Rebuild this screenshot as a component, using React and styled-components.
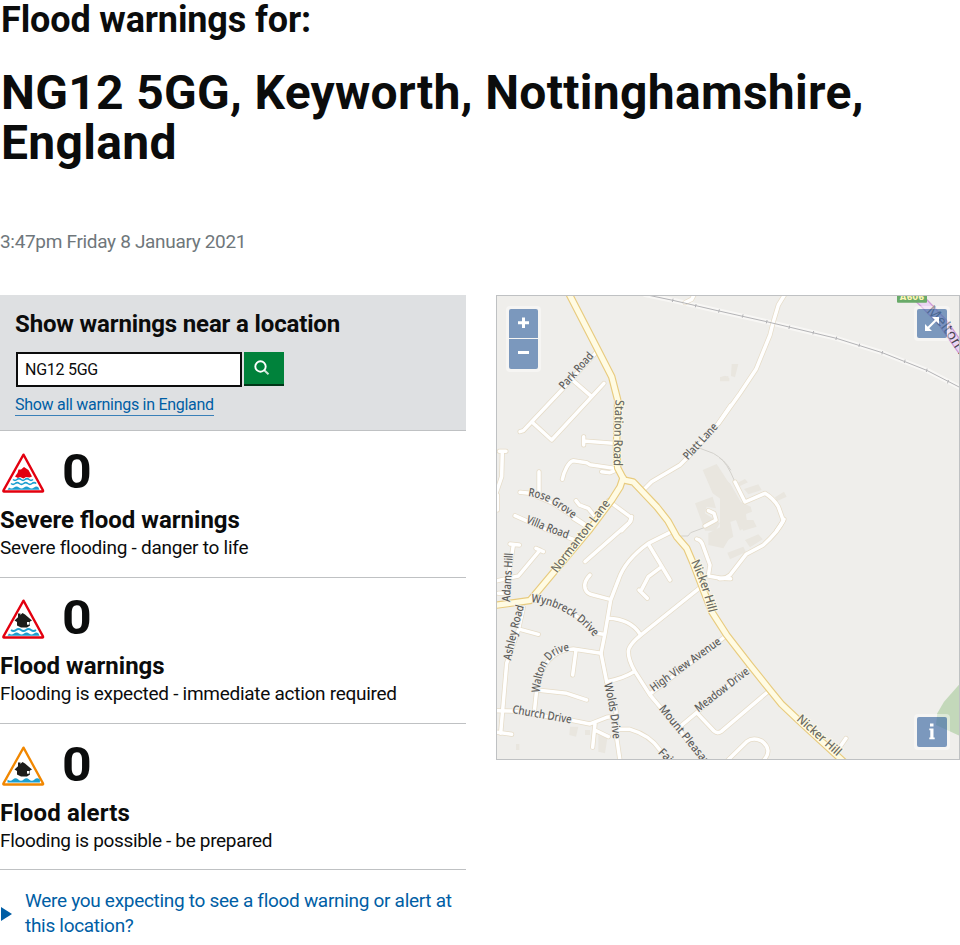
import React from "react";
import styled, { createGlobalStyle } from "styled-components";

const GlobalStyle = createGlobalStyle`
  *, *::before, *::after { box-sizing: border-box; }
  body {
    margin: 0;
    background: #fff;
    color: #0b0c0c;
    font-family: Roboto, "Liberation Sans", sans-serif;
    overflow: hidden;
  }
  h1, h2, h3, p { margin: 0; }
`;

/* ---------- page header ---------- */
const Page = styled.main`
  width: 960px;
  height: 945px;
  overflow: hidden;
`;
const Lead = styled.h2`
  font-size: 36px;
  line-height: 40px;
  letter-spacing: -0.13px;
  padding-left: 1px;
`;
const Place = styled.h1`
  margin-top: 28px;
  padding-left: 1px;
  font-size: 48px;
  line-height: 50px;
  letter-spacing: 0.31px;
`;
const Timestamp = styled.p`
  margin-top: 61px;
  font-size: 19px;
  line-height: 25px;
  letter-spacing: -0.32px;
  color: #6f777b;
`;
const Columns = styled.div`
  display: grid;
  grid-template-columns: 466px 464px;
  column-gap: 30px;
  margin-top: 41px;
  align-items: start;
`;

/* ---------- search panel ---------- */
const SearchPanel = styled.section`
  height: 136px;
  padding: 14px 15px 0;
  background: #dee0e2;
  border-bottom: 1px solid #bfc1c3;
`;
const PanelTitle = styled.h3`
  font-size: 24px;
  line-height: 30px;
  letter-spacing: -0.15px;
`;
const SearchRow = styled.form`
  display: flex;
  align-items: flex-start;
  gap: 2px;
  margin: 13px 0 0 1px;
`;
const SearchInput = styled.input`
  width: 226px;
  height: 35px;
  padding: 0 7px;
  border: 2px solid #0b0c0c;
  border-radius: 0;
  background: #fff;
  color: #0b0c0c;
  font: 400 16px Roboto, sans-serif;
  letter-spacing: -0.26px;
  outline: 0;
`;
const SearchButton = styled.button`
  display: grid;
  place-items: center;
  width: 40px;
  height: 34px;
  padding: 0 5px 0 0;
  border: 0;
  border-bottom: 2px solid #003618;
  background: #00823b;
`;
const TextLink = styled.a`
  display: inline-block;
  margin-top: 8px;
  font-size: 16px;
  line-height: 20px;
  letter-spacing: -0.29px;
  color: #005ea5;
  border-bottom: 1px solid #3a80b8;
`;

/* ---------- warning levels ---------- */
const Level = styled.section`
  height: ${(p) => p.$height}px;
  padding-top: ${(p) => p.$top}px;
  border-bottom: 1px solid #bfc1c3;
`;
const LevelHead = styled.div`
  display: flex;
  align-items: flex-start;
  gap: 16px;
  height: 58px;
  padding-left: 1px;
`;
const LevelIcon = styled.svg`
  width: 45px;
  height: 42px;
  margin-top: 5px;
`;
const Count = styled.span`
  font-weight: 700;
  font-size: 48px;
  line-height: 50px;
  transform: scaleX(1.08);
  transform-origin: left;
`;
const LevelTitle = styled.h3`
  font-size: 24px;
  line-height: 30px;
  letter-spacing: ${(p) => p.$spacing}px;
`;
const LevelText = styled.p`
  font-size: 19px;
  line-height: 25px;
  letter-spacing: ${(p) => p.$spacing}px;
`;
const Disclosure = styled.div`
  display: flex;
  align-items: center;
  gap: 13px;
  margin-top: 18px;
  color: #005ea5;
  font-size: 19px;
  line-height: 25px;
  letter-spacing: -0.3px;
`;
const Marker = styled.span`
  flex: none;
  margin: 1px 0 0 1px;
  border-style: solid;
  border-width: 7px 0 7px 11px;
  border-color: transparent transparent transparent #005ea5;
`;

/* ---------- map ---------- */
const MapFrame = styled.section`
  position: relative;
  width: 464px;
  height: 465px;
  border: 1px solid #bfc1c3;
  background: #efeeeb;
  overflow: hidden;
`;
const MapCanvas = styled.svg`
  display: block;
  width: 462px;
  height: 463px;
`;
const Control = styled.div`
  position: absolute;
  ${(p) => p.$place};
  display: grid;
  gap: 1px;
  padding: 3px;
  border-radius: 4px;
  background: rgba(255, 255, 255, 0.42);
`;
const ControlButton = styled.button`
  display: grid;
  place-items: center;
  width: ${(p) => p.$w || 30}px;
  height: ${(p) => p.$h || 30}px;
  padding: 0;
  border: 0;
  border-radius: ${(p) => p.$radius || "2px"};
  background: rgba(0, 60, 136, 0.5);
`;

const House = ({ y = 0 }) => (
  <g fill="#1d1d1b" transform={`translate(0 ${y})`}>
    <path d="M13.5 22.5 L21.5 15 L24 16.500 L31 22.500 L29 23.500 V27.500 L26 29.500 H20 L16 27.500 V24 Z" />
    <path d="M17 15.500 h2.500 v4 h-2.500z" />
    <path d="M26 24 h2.500 v2.700 h-2.500z" fill="#fff" />
  </g>
);

const LowWater = () => (
  <path
    d="M6.500 37.800 L8 35.500 q2.500 2 5 0 t5 0 t5 0 t5 0 t5 0 t4.500 0 L38.500 37.800 Z"
    fill="#1c9fd0"
  />
);

function WarningIcon({ kind }) {
  const edge = kind === "alert" ? "#f18700" : "#e3000f";
  return (
    <LevelIcon viewBox="0 0 45 42">
      <path
        d="M22.500 2.600 L42 38.400 Q42.500 39.500 41.400 39.500 H3 Q1.900 39.500 2.500 38.400 Z"
        fill="#fff"
        stroke={edge}
        strokeWidth="2.300"
        strokeLinejoin="round"
      />
      {kind === "severe" && (
        <>
          <path d="M14 24.500 L16.500 21 L17.500 17.500 H20 L23 15 L27.500 18 L31 24.500 L28.500 25.500 L25 25 L22.500 26.500 L19 25 L17 26 Z" fill={edge} />
          <path d="M12 27.500 q2 1.800 4 0 t4 0 t4 0 t4 0 t4 0" fill="none" stroke="#1c9fd0" strokeWidth="1.600" />
          <path d="M10 31.500 q2.100 1.800 4.200 0 t4.200 0 t4.200 0 t4.200 0 t4.200 0 t4.200 0" fill="none" stroke="#1c9fd0" strokeWidth="1.600" />
          <LowWater />
        </>
      )}
      {kind === "warning" && (
        <>
          <House />
          <path d="M10 32 q2.500 2 5 0 t5 0 t5 0 t5 0 t5 0" fill="none" stroke="#1c9fd0" strokeWidth="1.700" />
          <LowWater />
        </>
      )}
      {kind === "alert" && (
        <>
          <House y={2} />
          <path d="M6.500 37.500 V34.500 q2.700 2.500 5.400 0 t5.400 0 t5.400 0 t5.400 0 t5.400 0 t5.400 0 V37.500 Z" fill="#1c9fd0" />
        </>
      )}
    </LevelIcon>
  );
}

/* The map is stored as four tiles drawn at three times display size. */
const tiles = {
  nw: "translate(490 290) scale(.33333)",
  ne: "translate(720 290) scale(.33333)",
  sw: "translate(490 520) scale(.33333)",
  se: "translate(720 520) scale(.33333)",
};

const streets = [
  ["nw", "M90 425 L100 422 L215 300 L325 180 M125 395 L185 450 L342 280 M245 268 L305 320"],
  ["nw", "M281 440 V465 M281 453 L370 460 M217 568 C222 545 235 515 250 512 L290 518 L300 524 L382 536 M335 545 L360 548 L383 538"],
  ["nw", "M28 484 H48 M37 484 L35 560 L18 610 M22 615 V660 M147 545 V605 M90 607 L120 610 L190 640 L250 680 L300 714"],
  ["nw", "M258 632 L268 645 L295 655 L315 680 M355 632 L420 680 Q428 688 418 698 L395 722"],
  ["nw", "M458 602 L485 575 L570 525 L600 495 L685 400 L722 346"],
  ["nw", "M585 38 L605 28 L612 15"],
  ["ne", "M-4 400 L60 310 L108 238 L150 135 L160 95 L175 45 L194 14"],
  ["nw", "M655 662 L672 670 L678 690 L645 708"],
  ["ne", "M45 576 L75 636 L135 610 Q160 625 175 650 L190 692 L170 722"],
  ["se", "M192 -2 Q175 35 130 75 L78 103 L30 165 Q15 178 -2 176"],
  ["sw", "M620 57 Q635 60 640 80 L660 135 L655 168 Q690 176 722 176"],
  ["sw", "M425 -10 L418 8 L285 125 M250 -5 L290 20 M75 -13 L160 25 L255 60"],
  ["sw", "M60 72 L88 75 M70 75 L55 170 L50 240 M18 183 L85 168 L150 90 M138 85 L160 95 M25 220 H45"],
  ["sw", "M300 165 Q280 185 285 205 Q290 222 310 225 L360 238"],
  ["sw", "M545 35 L475 70 Q405 120 385 180 L362 240 L345 340 L333 400 L350 485 L378 570 L378 640 L390 722"],
  ["sw", "M475 72 L540 180 M515 140 L475 170 L455 208 M447 210 L472 235"],
  ["sw", "M630 203 L455 343 Q415 375 415 395 Q415 420 435 455 L480 525 L560 620 L640 722"],
  ["sw", "M355 295 Q420 297 450 342 M125 240 Q230 240 310 338 L340 343"],
  ["sw", "M100 262 L85 330 L50 430 L32 640 M90 328 L145 343 M22 637 L65 643"],
  ["sw", "M18 572 L65 573 L240 600 L300 612 L350 592 L378 588 M315 612 L308 682 M318 632 L355 650"],
  ["sw", "M333 400 L250 387 Q160 390 140 510 L133 575 M258 390 L248 465 M140 510 L230 520 L290 540"],
  ["sw", "M350 485 Q400 475 432 455 M370 628 L420 628 Q480 645 510 690 L545 722"],
  ["sw", "M480 522 L705 350 M570 620 L620 578 L785 438 M620 578 L672 633 Q682 642 694 634 L840 510"],
  ["se", "M22 722 L80 665 Q100 650 125 663 Q160 690 130 722 M350 695 L378 655"],
];

const mainRoads = [
  "M566 288 L598 350 L611.700 376.700 L617.700 400 L616.500 446 L617.700 468 L624 480 L633.300 482 L656.700 506.700 L668 521 L676.700 536.700 L686.700 548.300 L693 563 L711.700 611.700 L726.700 635 L750 665 L770 690 L781.700 704.300 L798.300 720 L844 762",
  "M623 478 L620 487 L611.700 500 L590 529 L553 573 L530 600.500 L494 605.500",
];

const railway =
  "M645 294.500 L672.700 300.300 L719 311 L766.700 321.700 L836.300 338.300 L882.300 352.700 L926.700 370.300 L962 388.500";

const buildings = [
  ["nw", "M638 540 L680 522 L724 590 V650 L668 610 Z M690 262 L705 257 L718 264 V274 H690 Z"],
  ["nw", "M615 640 L668 620 L678 655 L650 650 L645 670 L690 700 L676 722 H645 Z"],
  ["ne", "M35 222 H55 L45 262 L33 258 Z M0 262 L25 258 V272 H0 Z M50 580 L75 567 L84 577 L55 590 Z M72 597 L115 583 L125 600 L85 613 Z M165 622 L192 605 L200 620 L170 634 Z"],
  ["ne", "M0 560 L30 580 L62 635 L92 650 L96 665 L78 672 L82 705 L60 722 L48 690 L20 700 L20 722 H0 Z"],
  ["se", "M50 0 H100 L110 20 L70 32 Z M75 60 L115 43 L128 58 L90 82 Z M22 98 L70 80 L78 96 L30 118 Z M0 8 L30 0 L40 50 L15 65 L12 82 L0 75 Z"],
  ["sw", "M240 620 L265 620 L258 650 L238 645 Z M325 645 L352 655 L345 700 L325 695 Z M285 630 H300 V645 H285 Z M78 672 H88 V690 H78 Z M655 40 L690 22 L718 55 L700 85 L655 75 Z"],
];

const tracks = [
  ["nw", "M630 475 L670 490 Q705 510 722 540"],
  ["ne", "M-2 503 Q20 515 45 576"],
  ["sw", "M575 48 L594 48 L602 38 L645 22"],
];

const railTicks = [
  [672.700, 300.300], [695.700, 305.700], [719, 311], [742.700, 316], [766.700, 321.700], [789.300, 327.300],
  [813.300, 332.700], [836.300, 338.300], [859.300, 345.300], [882.300, 352.700], [904.700, 361.300], [926.700, 370.300], [948, 381.700],
];

const labels = [
  { t: "Park Road", d: "M564 390 L606 343", len: 45 },
  { t: "Station Road", d: "M615.500 400 Q613.500 435 613.500 490", len: 66, main: true },
  { t: "Platt Lane", d: "M688 460.500 L726 419", len: 45 },
  { t: "Rose Grove", d: "M528 496 Q548 498 572 518 L580 525", len: 51 },
  { t: "Villa Road", d: "M525.500 522.500 Q545 531 567 538.500 L577 542", len: 45 },
  { t: "Normanton Lane", d: "M557 573.500 L617 495", len: 88, main: true },
  { t: "Adams Hill", d: "M510 602 L513.500 542", len: 49 },
  { t: "Ashley Road", d: "M511 660.500 Q515 640 524 606 L527 594", len: 56 },
  { t: "Wynbreck Drive", d: "M531 602 Q565 605 591 633.500 L602 646", len: 74 },
  { t: "Walton Drive", d: "M539.500 693 Q543 650 572 651 L585 652", len: 57 },
  { t: "Church Drive", d: "M512 713 L582 725.500", len: 60 },
  { t: "Wolds Drive", d: "M604 684 Q611 712 613 739 L614 755", len: 56 },
  { t: "Nicker Hill", d: "M691 562 Q702 585 708.500 612 L712 626", len: 54, main: true },
  { t: "Nicker Hill", d: "M796 720 L850 768", len: 55, main: true },
  { t: "High View Avenue", d: "M653.500 692 L736 633", len: 84 },
  { t: "Meadow Drive", d: "M698.500 712.500 L761 664.500", len: 65 },
  { t: "Mount Pleasant", d: "M658.500 709 L719 783", len: 78 },
  { t: "Fairway", d: "M657.500 753 L698 793", len: 41 },
];

const stroke = { fill: "none", strokeLinecap: "round", strokeLinejoin: "round" };

const TileGroup = ({ items, ...style }) =>
  items.map(([tile, d], i) => (
    <g key={i} transform={tiles[tile]}>
      <path d={d} {...style} />
    </g>
  ));

function StreetMap() {
  return (
    <MapCanvas viewBox="497 296 462 463">
      <TileGroup items={buildings} fill="#e9e6df" />
      <path d="M960 683.500 L944 701.700 L937.300 713.300 L936 725 L960 736 Z" fill="#c3d8ba" />
      <path d={railway} {...stroke} stroke="#f8f7f5" strokeWidth="5" />
      <TileGroup items={tracks} {...stroke} stroke="#d3d1cc" strokeWidth="3" />
      <TileGroup items={streets} {...stroke} stroke="#e6dcc8" strokeWidth="15" />
      <TileGroup items={streets} {...stroke} stroke="#ffffff" strokeWidth="10.500" />
      <path d={railway} {...stroke} stroke="#b3b3b6" strokeWidth="1" />
      {railTicks.map(([x, y]) => (
        <path key={x} d={`M${x - 0.400} ${y + 1.700} L${x + 0.400} ${y - 1.700}`} stroke="#b3b3b6" />
      ))}
      {mainRoads.map((d) => <path key={d} d={d} {...stroke} stroke="#e8cb7e" strokeWidth="7.500" />)}
      {mainRoads.map((d) => <path key={d} d={d} {...stroke} stroke="#fffbe3" strokeWidth="5.200" />)}
      <path d="M912 292 L924 303 L943 323 L962 350" {...stroke} stroke="#cf9bd6" strokeWidth="10" />
      <path d="M912 292 L924 303 L943 323 L962 350" {...stroke} stroke="#e9d5f3" strokeWidth="7.500" />
      <rect x="897" y="290" width="30" height="12.700" rx="1" fill="#69aa69" />
      <text x="912" y="299.500" textAnchor="middle" fontFamily="DejaVu Sans, sans-serif" fontWeight="700" fontSize="8.500" fill="#fdf5b8">A606</text>
      <defs>
        {labels.map((l, i) => <path key={i} id={`label-${i}`} d={l.d} />)}
        <path id="label-melton" d="M926 312 Q939 323 953 345 L975 380" />
      </defs>
      {labels.map((l, i) => (
        <text
          key={i}
          fontFamily="Noto Sans, sans-serif"
          fontSize={l.main ? 12.300 : 11.500}
          fontWeight="500"
          fill={l.main ? "#6b6b63" : "#5c5c5a"}
          stroke={l.main ? "#fffbe3" : "#efeeeb"}
          strokeWidth="2"
          strokeOpacity=".8"
          paintOrder="stroke"
        >
          <textPath href={`#label-${i}`} textLength={l.len} lengthAdjust="spacingAndGlyphs">{l.t}</textPath>
        </text>
      ))}
      <text fontFamily="Noto Sans, sans-serif" fontSize="14.500" fill="#4a4450">
        <textPath href="#label-melton" textLength="60" lengthAdjust="spacingAndGlyphs">Melton R</textPath>
      </text>
    </MapCanvas>
  );
}

const levels = [
  { kind: "severe", title: "Severe flood warnings", text: "Severe flooding - danger to life", height: 147, top: 16, spacing: 0, textSpacing: -0.250 },
  { kind: "warning", title: "Flood warnings", text: "Flooding is expected - immediate action required", height: 146, top: 15, spacing: 0, textSpacing: -0.280 },
  { kind: "alert", title: "Flood alerts", text: "Flooding is possible - be prepared", height: 146, top: 16, spacing: 0.160, textSpacing: -0.330 },
];

export default function App() {
  return (
    <Page>
      <GlobalStyle />
      <Lead>Flood warnings for:</Lead>
      <Place>NG12 5GG, Keyworth, Nottinghamshire, England</Place>
      <Timestamp>3:47pm Friday 8 January 2021</Timestamp>
      <Columns>
        <div>
          <SearchPanel>
            <PanelTitle>Show warnings near a location</PanelTitle>
            <SearchRow>
              <SearchInput defaultValue="NG12 5GG" aria-label="Location" />
              <SearchButton type="button" aria-label="Search">
                <svg width="16" height="16" viewBox="0 0 16 16" fill="none" stroke="#fff">
                  <circle cx="6.500" cy="6.500" r="5.200" strokeWidth="1.900" />
                  <path d="M10.300 10.300 L14.500 14.200" strokeWidth="2" strokeOpacity=".8" />
                </svg>
              </SearchButton>
            </SearchRow>
            <TextLink>Show all warnings in England</TextLink>
          </SearchPanel>
          {levels.map((l) => (
            <Level key={l.kind} $height={l.height} $top={l.top}>
              <LevelHead>
                <WarningIcon kind={l.kind} />
                <Count>0</Count>
              </LevelHead>
              <LevelTitle $spacing={l.spacing}>{l.title}</LevelTitle>
              <LevelText $spacing={l.textSpacing}>{l.text}</LevelText>
            </Level>
          ))}
          <Disclosure>
            <Marker />
            <span>Were you expecting to see a flood warning or alert at this location?</span>
          </Disclosure>
        </div>
        <MapFrame>
          <StreetMap />
          <Control $place="left: 9px; top: 10px">
            <ControlButton $w={29} $h={29} $radius="2px 2px 0 0" aria-label="Zoom in">
              <svg width="11" height="14" viewBox="0 0 11 14"><path d="M5.500 0.500 V11 M0 5.700 H11" stroke="#fff" strokeWidth="3" /></svg>
            </ControlButton>
            <ControlButton $w={29} $radius="0 0 2px 2px" aria-label="Zoom out">
              <svg width="11" height="14" viewBox="0 0 11 14"><path d="M0 5.500 H11" stroke="#fff" strokeWidth="3" /></svg>
            </ControlButton>
          </Control>
          <Control $place="left: 417px; top: 10px">
            <ControlButton $h={29} aria-label="Full screen">
              <svg width="16" height="16" viewBox="0 0 16 16">
                <path d="M4 12 L12 4" stroke="#fff" strokeWidth="2.200" />
                <path d="M8 1 H15 V8 L12.500 5.500 L10.500 3.500 Z M1 8 V15 H8 L5.500 12.500 L3.500 10.500 Z" fill="#fff" />
              </svg>
            </ControlButton>
          </Control>
          <Control $place="left: 417px; top: 418px">
            <ControlButton aria-label="Attribution">
              <svg width="8" height="20" viewBox="0 0 8 20">
                <path d="M2 1.500 h3.500 v3 h-3.500z M1.300 6.500 h4.200 v9 h1.200 v1.800 h-5.400 v-1.800 h1 v-7.200 h-1z" fill="#fff" />
              </svg>
            </ControlButton>
          </Control>
        </MapFrame>
      </Columns>
    </Page>
  );
}
